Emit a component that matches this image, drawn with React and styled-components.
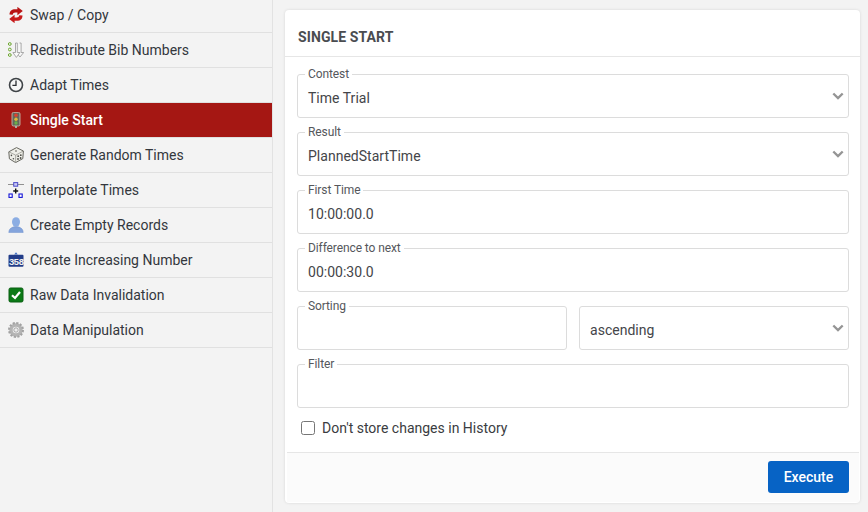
import React from 'react';
import styled, { createGlobalStyle } from 'styled-components';

const GlobalStyle = createGlobalStyle`
  html, body {
    margin: 0;
    height: 100%;
    background: #f3f3f3;
    overflow: hidden;
  }
  * { box-sizing: border-box; }
`;

const Page = styled.div`
  display: flex;
  width: 868px;
  height: 512px;
  font-family: Roboto, "Liberation Sans", sans-serif;
  font-size: 14px;
  color: #33373d;
  overflow: hidden;
`;

const Sidebar = styled.nav`
  width: 273px;
  flex: none;
  margin-top: -2px;
  border-right: 1px solid #e2e2e2;
`;

const MenuRow = styled.div`
  display: flex;
  align-items: center;
  height: 35px;
  padding-left: 8px;
  gap: 6px;
  letter-spacing: 0;
  font-weight: ${(p) => (p.$active ? 500 : 400)};
  color: ${(p) => (p.$active ? '#fff' : '#33373d')};
  background: ${(p) => (p.$active ? '#a51713' : 'transparent')};
  border-bottom: 1px solid #e0e0e0;
`;

const IconBox = styled.svg`
  width: 16px;
  height: 16px;
  flex: none;
`;

const Main = styled.main`
  flex: 1;
  padding: 10px 8px 9px 12px;
`;

const Card = styled.section`
  height: 493px;
  background: #fff;
  border-radius: 4px;
  box-shadow: 0 0 3px rgba(0, 0, 0, 0.12);
  display: flex;
  flex-direction: column;
`;

const CardHeader = styled.h2`
  margin: 0;
  height: 47px;
  padding: 19px 0 0 13px;
  font-size: 14px;
  line-height: 17px;
  font-weight: 700;
  letter-spacing: 0.1px;
  color: #4a4c50;
  border-bottom: 1px solid #e6e6e6;
`;

const Form = styled.div`
  flex: 1;
  display: flex;
  flex-direction: column;
  gap: 14px;
  padding: 17px 11px 0 12px;
`;

const Field = styled.div`
  position: relative;
  height: 44px;
  flex: ${(p) => (p.$inRow ? 1 : 'none')};
  display: flex;
  align-items: center;
  padding: 4px 10px 0;
  border: 1px solid #dcdcdc;
  border-radius: 3px;
  letter-spacing: 0.02px;
  color: #444549;
`;

const FieldLabel = styled.span`
  position: absolute;
  top: -8px;
  left: 7px;
  padding: 0 3px;
  background: #fff;
  font-size: 12px;
  line-height: 14px;
  letter-spacing: -0.1px;
  color: #55575c;
`;

const Chevron = styled.svg`
  position: absolute;
  right: 4px;
  top: 17px;
  width: 12px;
  height: 8px;
`;

const Pair = styled.div`
  display: flex;
  gap: 12px;
`;

const CheckRow = styled.label`
  display: flex;
  align-items: center;
  gap: 7px;
  height: 14px;
  margin: -1px 0 0 4px;
  letter-spacing: 0;
  color: #3a3c41;
`;

const CheckBox = styled.span`
  width: 14px;
  height: 14px;
  border: 1px solid #767676;
  border-radius: 2.5px;
  background: #fff;
`;

const CardFooter = styled.footer`
  display: flex;
  justify-content: flex-end;
  height: 50px;
  margin: 0 1px 1px 2px;
  padding: 8px 10px 0 0;
  background: #fbfbfb;
  border-top: 1px solid #e6e6e6;
`;

const ExecuteButton = styled.button`
  width: 81px;
  height: 32px;
  padding: 0;
  border: none;
  border-radius: 3px;
  background: #0763c5;
  color: #fff;
  font: 500 14px Roboto, "Liberation Sans", sans-serif;
`;

const SwapIcon = () => (
  <IconBox viewBox="0 0 16 16">
    <path d="M1.5 7.6C1.5 3.8 4 2.2 7 2.2h2.4V-.2l5.4 4.3-5.4 4.2V5.6H7.4C5.8 5.6 5 6.3 4.7 7.8L1.5 7.6Z" fill="#b91414" />
    <path d="M14.5 8.4c0 3.8-2.5 5.4-5.5 5.4H6.6v2.4L1.2 11.9l5.4-4.2v2.7h2c1.6 0 2.4-.7 2.7-2.2l3.2.2Z" fill="#c71c1c" />
  </IconBox>
);

const RedistributeIcon = () => (
  <IconBox viewBox="0 0 16 16">
    <circle cx="1.8" cy="2" r="1.4" fill="none" stroke="#6aa52c" />
    <circle cx="1.8" cy="7.5" r="1.4" fill="none" stroke="#6aa52c" />
    <circle cx="1.8" cy="13" r="1.4" fill="none" stroke="#6aa52c" />
    <path d="M11.5 1h1.6v9.5h2.6L12 15l-1.6-1.9" fill="#f8f8f8" stroke="#969696" strokeWidth=".8" />
    <path d="M7.5 1h1.8v9.5h2.6L8.4 15.4 4.9 10.5h2.6V1Z" fill="#fafafa" stroke="#969696" strokeWidth=".8" />
  </IconBox>
);

const ClockIcon = () => (
  <IconBox viewBox="0 0 16 16">
    <circle cx="8" cy="8" r="6.5" fill="#f7f7f7" stroke="#3f4347" strokeWidth="1.6" />
    <path d="M8 3.6V8.4H4.4" fill="none" stroke="#2c2f33" strokeWidth="1.3" />
  </IconBox>
);

const TrafficIcon = () => (
  <IconBox viewBox="0 0 16 16">
    <rect x="7" y="13" width="2" height="3" fill="#a8a89c" />
    <rect x="4" y="0.4" width="8" height="13.6" rx="1.5" fill="#66665a" stroke="#c9c9b8" strokeWidth=".8" />
    <circle cx="8" cy="3.3" r="1.7" fill="#e0402e" />
    <circle cx="8" cy="7.2" r="1.7" fill="#e0b93a" />
    <circle cx="8" cy="11" r="1.7" fill="#68b04a" />
  </IconBox>
);

const DiceIcon = () => (
  <IconBox viewBox="0 0 16 16">
    <path d="M8.5.6 15.4 4 14.8 11.6 7.6 15.6 1.4 11.8.8 4.8 8.5.6Z" fill="#efefe8" stroke="#66665f" />
    <path d="M1 4.9 7.7 8.2 7.6 15.4M7.7 8.2 15.2 4.1" fill="none" stroke="#8d8d85" strokeWidth=".7" />
    <g fill="#4e4e48">
      <circle cx="3.4" cy="8.4" r=".8" />
      <circle cx="5.4" cy="11.8" r=".8" />
      <circle cx="10" cy="12" r=".9" />
      <circle cx="12.8" cy="8.2" r=".9" />
      <circle cx="12.6" cy="11" r=".9" />
      <circle cx="10.2" cy="9.2" r=".9" />
      <circle cx="8" cy="4" r=".8" />
    </g>
  </IconBox>
);

const InterpolateIcon = () => (
  <IconBox viewBox="0 0 16 16">
    <path d="M0 2.5h16" stroke="#777" strokeWidth=".8" />
    <rect x="5.7" y="0.6" width="4" height="3.6" fill="#c9c9f4" stroke="#4b4bc8" />
    <path d="M7.7 6.5v5M5.2 9h5" stroke="#111" strokeWidth="1.4" />
    <rect x="1" y="12" width="3.2" height="3.4" fill="#fff" stroke="#1313d6" strokeWidth="1.1" />
    <rect x="11" y="12" width="3.2" height="3.4" fill="#fff" stroke="#1313d6" strokeWidth="1.1" />
  </IconBox>
);

const PersonIcon = () => (
  <IconBox viewBox="0 0 16 16">
    <ellipse cx="8" cy="5" rx="4" ry="4.8" fill="#8badE3" />
    <path d="M.8 15.6c0-3.6 2.4-5 5-5.8h4.4c2.6.8 5 2.2 5 5.8H.8Z" fill="#84a4dc" stroke="#6e90cc" strokeWidth=".5" />
  </IconBox>
);

const CounterIcon = () => (
  <IconBox viewBox="0 0 16 16">
    <path d="M8 .2 9.8 2.6H6.2L8 .2Z" fill="#3f6fc4" />
    <rect x="0.5" y="2.8" width="15" height="12" rx="1" fill="#223c88" />
    <text x="8" y="12.6" textAnchor="middle" fontFamily="Liberation Mono, monospace" fontWeight="700" fontSize="9.5" fill="#f2f2f2" letterSpacing="-.8">358</text>
  </IconBox>
);

const CheckIcon = () => (
  <IconBox viewBox="0 0 16 16">
    <rect x="1" y="1" width="14" height="14" rx="1.5" fill="#0b7a16" stroke="#0a5f13" />
    <path d="M4 8.2 7 11l5-6" fill="none" stroke="#fff" strokeWidth="2.2" />
  </IconBox>
);

const GearIcon = () => (
  <IconBox viewBox="0 0 16 16">
    <circle cx="8" cy="8" r="5" fill="none" stroke="#b4b4b4" strokeWidth="3.4" />
    <circle cx="8" cy="8" r="7" fill="none" stroke="#a2a2a2" strokeWidth="2" strokeDasharray="2.2 1.47" />
    <circle cx="8" cy="8" r="2.2" fill="#ececec" stroke="#8b8b8b" strokeWidth=".7" />
  </IconBox>
);

const menuItems = [
  { label: 'Swap / Copy', Icon: SwapIcon },
  { label: 'Redistribute Bib Numbers', Icon: RedistributeIcon },
  { label: 'Adapt Times', Icon: ClockIcon },
  { label: 'Single Start', Icon: TrafficIcon, active: true },
  { label: 'Generate Random Times', Icon: DiceIcon },
  { label: 'Interpolate Times', Icon: InterpolateIcon },
  { label: 'Create Empty Records', Icon: PersonIcon },
  { label: 'Create Increasing Number', Icon: CounterIcon },
  { label: 'Raw Data Invalidation', Icon: CheckIcon },
  { label: 'Data Manipulation', Icon: GearIcon },
];

const DownChevron = () => (
  <Chevron viewBox="0 0 12 8">
    <path d="M1.3 1.5 6 6l4.7-4.5" fill="none" stroke="#959595" strokeWidth="2.4" />
  </Chevron>
);

const FormField = ({ label, value, select, inRow }) => (
  <Field $inRow={inRow}>
    {label && <FieldLabel>{label}</FieldLabel>}
    {value}
    {select && <DownChevron />}
  </Field>
);

const App = () => (
  <Page>
    <GlobalStyle />
    <Sidebar>
      {menuItems.map(({ label, Icon, active }) => (
        <MenuRow key={label} $active={active}>
          <Icon />
          {label}
        </MenuRow>
      ))}
    </Sidebar>
    <Main>
      <Card>
        <CardHeader>SINGLE START</CardHeader>
        <Form>
          <FormField label="Contest" value="Time Trial" select />
          <FormField label="Result" value="PlannedStartTime" select />
          <FormField label="First Time" value="10:00:00.0" />
          <FormField label="Difference to next" value="00:00:30.0" />
          <Pair>
            <FormField label="Sorting" inRow />
            <FormField value="ascending" select inRow />
          </Pair>
          <FormField label="Filter" />
          <CheckRow>
            <CheckBox />
            Don't store changes in History
          </CheckRow>
        </Form>
        <CardFooter>
          <ExecuteButton>Execute</ExecuteButton>
        </CardFooter>
      </Card>
    </Main>
  </Page>
);

export default App;
